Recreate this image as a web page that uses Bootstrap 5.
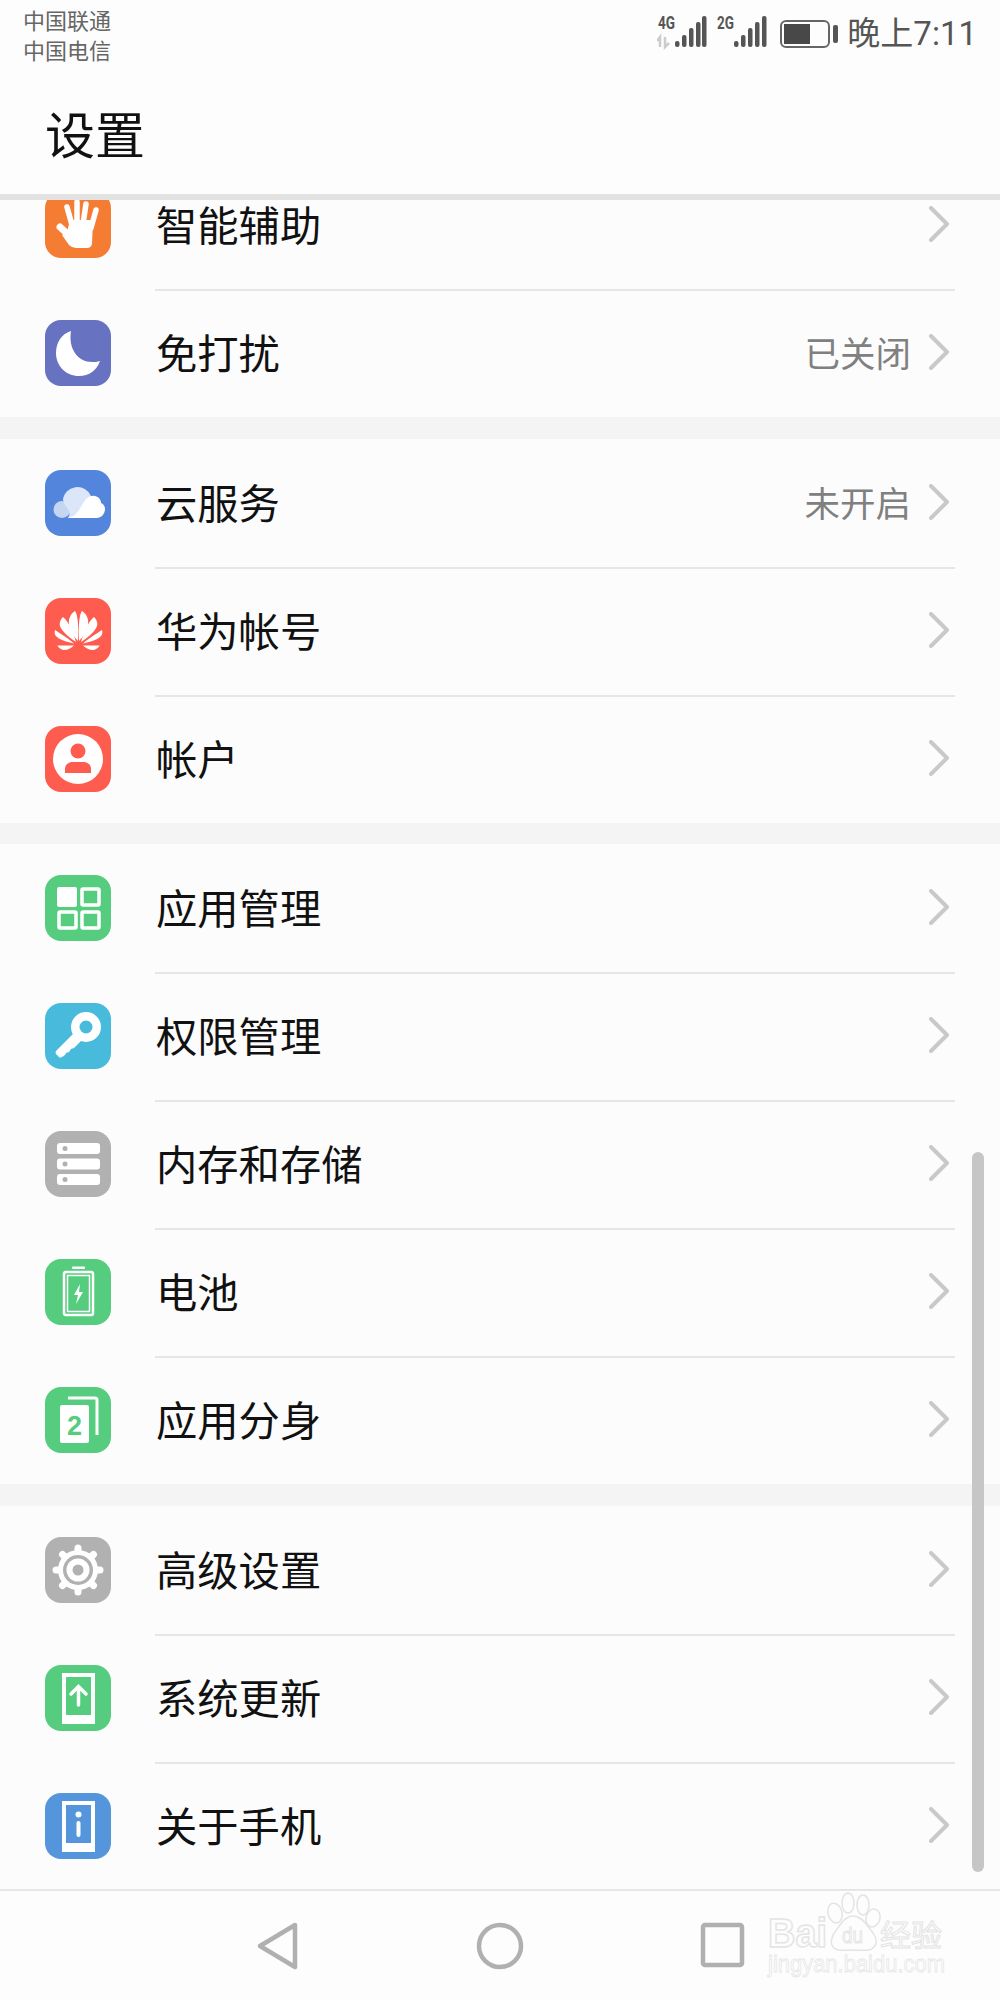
<!DOCTYPE html>
<html lang="zh-CN">
<head>
    <meta charset="UTF-8">
    <title>设置</title>
    <link href="https://cdn.jsdelivr.net/npm/bootstrap@5.3.0/dist/css/bootstrap.min.css" rel="stylesheet">
    <style>
        body { background: #fcfcfc; font-family: "Noto Sans CJK SC", "Liberation Sans", sans-serif; width: 1000px; height: 2000px; overflow: hidden; }
        .phone-top { height: 194px; background: #fdfdfd; }
        .status-strip { height: 68px; padding: 4px 23px 0 23px; }
        .carriers { font-size: 22px; line-height: 30px; color: #666; }
        .status-right { margin-top: 10px; }
        .clock { font-family: Roboto, "Noto Sans CJK SC", sans-serif; font-size: 33px; line-height: 40px; color: #555; margin-left: 9px; }
        .page-title { font-size: 50px; line-height: 56px; color: #111; margin: 36px 0 0 45px; }
        .top-rule { height: 6px; background: #e2e2e2; }
        .settings-scroll { height: 1689px; overflow: hidden; position: relative; }
        .settings-list { margin-top: -39px; }
        .group-gap { height: 22px; background: #f4f4f4; }
        .group-gap.thin { height: 21px; }
        .set-row { height: 128px; padding-left: 45px; }
        .set-icon { width: 66px; height: 66px; flex: none; display: block; margin-bottom: 1px; }
        .set-body { margin: 0 45px -2px 44px; padding: 0 6px 2px 0; border-bottom: 2px solid #e6e6e6; font-size: 41.3px; color: #111; }
        .set-body > span:first-child { margin-left: 1px; }
        .set-row.last .set-body { border-bottom-color: transparent; }
        .set-value { font-size: 35.5px; color: #808080; margin-right: 18px; }
        .chev { width: 20px; height: 36px; flex: none; }
        .scroll-thumb { position: absolute; right: 16px; top: 952px; width: 12px; height: 720px; border-radius: 6px; background: #c6c6c6; }
        .nav-strip { height: 111px; border-top: 2px solid #e6e6e6; background: #fdfdfd; position: relative; }
        .nav-btn { position: absolute; top: 30px; }
        .watermark { position: absolute; left: 764px; top: 0; width: 200px; height: 100px; }
    </style>
</head>
<body>

<div class="phone-top">
    <div class="status-strip d-flex justify-content-between align-items-start">
        <div class="carriers">中国联通<br>中国电信</div>
        <div class="status-right d-flex align-items-center">
            <svg width="176" height="40" viewBox="0 0 176 40">
                <g fill="#555">
                    <text x="1" y="15" font-family="Roboto" font-weight="700" font-size="18" textLength="17" lengthAdjust="spacingAndGlyphs">4G</text>
                    <rect x="18" y="27" width="4.500" height="6" rx="2"/><rect x="25" y="21" width="4.500" height="12" rx="2"/><rect x="32" y="14" width="4.500" height="19" rx="2"/><rect x="39" y="8" width="4.500" height="25" rx="2"/><rect x="45" y="2" width="4.500" height="31" rx="2"/>
                    <text x="60" y="15" font-family="Roboto" font-weight="700" font-size="18" textLength="17" lengthAdjust="spacingAndGlyphs">2G</text>
                    <rect x="77" y="27" width="4.500" height="6" rx="2"/><rect x="84" y="21" width="4.500" height="12" rx="2"/><rect x="91" y="14" width="4.500" height="19" rx="2"/><rect x="98" y="8" width="4.500" height="25" rx="2"/><rect x="105" y="2" width="4.500" height="31" rx="2"/>
                </g>
                <path d="M3 33V23L0 27M8 23v10l4-4" fill="none" stroke="#ccc" stroke-width="2.500"/>
                <rect x="124" y="7" width="48" height="26" rx="5" fill="none" stroke="#666" stroke-width="2"/>
                <rect x="127" y="10" width="26" height="20" fill="#484848"/>
            </svg>
            <svg width="5" height="18" viewBox="0 0 5 18"><rect width="5" height="18" rx="2" fill="#555"/></svg>
            <div class="clock">晚上7:11</div>
        </div>
    </div>
    <div class="page-title">设置</div>
</div>
<div class="top-rule"></div>

<div class="settings-scroll">
    <div class="settings-list">

        <div class="set-row d-flex">
            <svg class="set-icon align-self-center" viewBox="0 0 66 66"><rect width="66" height="66" rx="16" fill="#f57c33"/><path d="M15 35 27 46" stroke="#fff" stroke-width="7" stroke-linecap="round"/><path d="M22 15l5 18M32 10v22M41 12l-3 20M51 18l-5 18" stroke="#fff" stroke-width="5.500" stroke-linecap="round"/><path d="M25 28h23l-1 24q-1 4-5 4H31q-4 0-7-3L17 43l5-3z" fill="#fff"/></svg>
            <div class="set-body flex-grow-1 d-flex align-items-center">
                <span class="flex-grow-1">智能辅助</span>
                <svg class="chev" viewBox="0 0 20 36"><path d="M2 2 18 18 2 34" fill="none" stroke="#c9c9c9" stroke-width="4" stroke-linecap="round" stroke-linejoin="round"/></svg>
            </div>
        </div>
        <div class="set-row last d-flex">
            <svg class="set-icon align-self-center" viewBox="0 0 66 66"><rect width="66" height="66" rx="16" fill="#6772c0"/><path d="M26 11C16 14 11 23 11 33c0 13 10 23 23 23 10 0 18-6 21-15-3 1-5 1-8 1-14 0-24-13-21-31z" fill="#fff"/></svg>
            <div class="set-body flex-grow-1 d-flex align-items-center">
                <span class="flex-grow-1">免打扰</span>
                <span class="set-value">已关闭</span>
                <svg class="chev" viewBox="0 0 20 36"><path d="M2 2 18 18 2 34" fill="none" stroke="#c9c9c9" stroke-width="4" stroke-linecap="round" stroke-linejoin="round"/></svg>
            </div>
        </div>
        <div class="group-gap"></div>

        <div class="set-row d-flex">
            <svg class="set-icon align-self-center" viewBox="0 0 66 66"><rect width="66" height="66" rx="16" fill="#5385dc"/><circle cx="17" cy="39.500" r="8.500" fill="#c5d6f3"/><path d="M18 30a14.500 14 0 0 1 28-4L38 48H23q3-4 0-9-4-4-5-9z" fill="#dbe6f8"/><path d="M22 48c8-1 11-6 15-13 4-7 8-10 13-9 4 1 6 4 6 7 3 1 4 4 4 6 0 5-4 9-8 9z" fill="#fff"/></svg>
            <div class="set-body flex-grow-1 d-flex align-items-center">
                <span class="flex-grow-1">云服务</span>
                <span class="set-value">未开启</span>
                <svg class="chev" viewBox="0 0 20 36"><path d="M2 2 18 18 2 34" fill="none" stroke="#c9c9c9" stroke-width="4" stroke-linecap="round" stroke-linejoin="round"/></svg>
            </div>
        </div>
        <div class="set-row d-flex">
            <svg class="set-icon align-self-center" viewBox="0 0 66 66"><rect width="66" height="66" rx="16" fill="#fe5c4e"/><g fill="#fff"><g id="huawei-half"><path d="M33 43C26 36 23 28 24 22c1-5 4-8 6-9 2 2 4 12 3 30z"/><path d="M31 44C23 39 17 33 15 28c-1-4 1-7 3-9 5 4 10 14 13 25z"/><path d="M29 45.500C21 44 13 41 10.500 37.500c-1-1.500-1-3.500-.5-5.500 6 4 14 9 19 13.500z"/><path d="M29 47.500H12.500c.5 1.500 2.500 3.500 5.500 4.500 4 .5 8-2 11-4.500z"/></g><use href="#huawei-half" transform="matrix(-1 0 0 1 67 0)"/></g></svg>
            <div class="set-body flex-grow-1 d-flex align-items-center">
                <span class="flex-grow-1">华为帐号</span>
                <svg class="chev" viewBox="0 0 20 36"><path d="M2 2 18 18 2 34" fill="none" stroke="#c9c9c9" stroke-width="4" stroke-linecap="round" stroke-linejoin="round"/></svg>
            </div>
        </div>
        <div class="set-row last d-flex">
            <svg class="set-icon align-self-center" viewBox="0 0 66 66"><rect width="66" height="66" rx="16" fill="#fe5c4e"/><circle cx="33" cy="33" r="25" fill="#fff"/><circle cx="33" cy="25" r="7.500" fill="#fe5c4e"/><path d="M20 47v-4c0-5 4-7 8-7h10c4 0 8 2 8 7v4z" fill="#fe5c4e"/></svg>
            <div class="set-body flex-grow-1 d-flex align-items-center">
                <span class="flex-grow-1">帐户</span>
                <svg class="chev" viewBox="0 0 20 36"><path d="M2 2 18 18 2 34" fill="none" stroke="#c9c9c9" stroke-width="4" stroke-linecap="round" stroke-linejoin="round"/></svg>
            </div>
        </div>
        <div class="group-gap thin"></div>

        <div class="set-row d-flex">
            <svg class="set-icon align-self-center" viewBox="0 0 66 66"><rect width="66" height="66" rx="16" fill="#55cc7e"/><rect x="12" y="12" width="20" height="20" rx="2" fill="#fff"/><g fill="none" stroke="#fff" stroke-width="3.500"><rect x="37" y="14" width="17" height="16" rx="1"/><rect x="14" y="37" width="17" height="16" rx="1"/><rect x="37" y="37" width="17" height="16" rx="1"/></g></svg>
            <div class="set-body flex-grow-1 d-flex align-items-center">
                <span class="flex-grow-1">应用管理</span>
                <svg class="chev" viewBox="0 0 20 36"><path d="M2 2 18 18 2 34" fill="none" stroke="#c9c9c9" stroke-width="4" stroke-linecap="round" stroke-linejoin="round"/></svg>
            </div>
        </div>
        <div class="set-row d-flex">
            <svg class="set-icon align-self-center" viewBox="0 0 66 66"><rect width="66" height="66" rx="16" fill="#48bbdc"/><circle cx="41" cy="24" r="15" fill="#fff"/><path d="M30 29 11 48q-1 2 0 3l3 3q1 1 3 0l3-2 1-2 3-1 2-3 3-1 8-8z" fill="#fff"/><circle cx="41" cy="24" r="6.500" fill="#48bbdc"/></svg>
            <div class="set-body flex-grow-1 d-flex align-items-center">
                <span class="flex-grow-1">权限管理</span>
                <svg class="chev" viewBox="0 0 20 36"><path d="M2 2 18 18 2 34" fill="none" stroke="#c9c9c9" stroke-width="4" stroke-linecap="round" stroke-linejoin="round"/></svg>
            </div>
        </div>
        <div class="set-row d-flex">
            <svg class="set-icon align-self-center" viewBox="0 0 66 66"><rect width="66" height="66" rx="16" fill="#b1b1b1"/><g fill="#fff"><rect x="12" y="12" width="43" height="11" rx="3"/><rect x="12" y="27.500" width="43" height="11" rx="3"/><rect x="12" y="43" width="43" height="11" rx="3"/></g><g fill="#b1b1b1"><circle cx="20" cy="17.500" r="2.500"/><circle cx="20" cy="33" r="2.500"/><circle cx="20" cy="48.500" r="2.500"/></g></svg>
            <div class="set-body flex-grow-1 d-flex align-items-center">
                <span class="flex-grow-1">内存和存储</span>
                <svg class="chev" viewBox="0 0 20 36"><path d="M2 2 18 18 2 34" fill="none" stroke="#c9c9c9" stroke-width="4" stroke-linecap="round" stroke-linejoin="round"/></svg>
            </div>
        </div>
        <div class="set-row d-flex">
            <svg class="set-icon align-self-center" viewBox="0 0 66 66"><rect width="66" height="66" rx="16" fill="#55cc7e"/><rect x="27" y="7.500" width="13" height="2.500" rx="1" fill="#fff"/><rect x="19" y="13" width="29" height="43" rx="2" fill="none" stroke="#fff" stroke-width="2.500"/><rect x="22.500" y="16.500" width="22" height="36" fill="none" stroke="#fff" stroke-width="1.500"/><path d="M35 25l-6 11h4l-2 9 7-12h-4z" fill="#fff"/></svg>
            <div class="set-body flex-grow-1 d-flex align-items-center">
                <span class="flex-grow-1">电池</span>
                <svg class="chev" viewBox="0 0 20 36"><path d="M2 2 18 18 2 34" fill="none" stroke="#c9c9c9" stroke-width="4" stroke-linecap="round" stroke-linejoin="round"/></svg>
            </div>
        </div>
        <div class="set-row last d-flex">
            <svg class="set-icon align-self-center" viewBox="0 0 66 66"><rect width="66" height="66" rx="16" fill="#55cc7e"/><path d="M23 11h27q2 0 2 2v35" fill="none" stroke="#fff" stroke-width="3"/><rect x="15" y="18" width="29" height="38" rx="2" fill="#fff"/><text x="29.500" y="48" text-anchor="middle" font-family="Liberation Sans" font-weight="700" font-size="27" fill="#55cc7e">2</text></svg>
            <div class="set-body flex-grow-1 d-flex align-items-center">
                <span class="flex-grow-1">应用分身</span>
                <svg class="chev" viewBox="0 0 20 36"><path d="M2 2 18 18 2 34" fill="none" stroke="#c9c9c9" stroke-width="4" stroke-linecap="round" stroke-linejoin="round"/></svg>
            </div>
        </div>
        <div class="group-gap"></div>

        <div class="set-row d-flex">
            <svg class="set-icon align-self-center" viewBox="0 0 66 66"><rect width="66" height="66" rx="16" fill="#b1b1b1"/><circle cx="33" cy="33" r="20" fill="#fff"/><path d="M33 11v44M11 33h44M17.500 17.500l31 31M48.500 17.500l-31 31" stroke="#fff" stroke-width="7" stroke-linecap="round"/><circle cx="33" cy="33" r="15" fill="#b1b1b1"/><circle cx="33" cy="33" r="11.500" fill="#fff"/><circle cx="33" cy="33" r="5.500" fill="#b1b1b1"/></svg>
            <div class="set-body flex-grow-1 d-flex align-items-center">
                <span class="flex-grow-1">高级设置</span>
                <svg class="chev" viewBox="0 0 20 36"><path d="M2 2 18 18 2 34" fill="none" stroke="#c9c9c9" stroke-width="4" stroke-linecap="round" stroke-linejoin="round"/></svg>
            </div>
        </div>
        <div class="set-row d-flex">
            <svg class="set-icon align-self-center" viewBox="0 0 66 66"><rect width="66" height="66" rx="16" fill="#55cc7e"/><rect x="19" y="10" width="29" height="47" fill="none" stroke="#fff" stroke-width="4"/><rect x="17" y="50" width="33" height="8" rx="1" fill="#fff"/><path d="M33.500 40V22M26 29l7.500-7.500L41 29" fill="none" stroke="#fff" stroke-width="3.500" stroke-linecap="round"/></svg>
            <div class="set-body flex-grow-1 d-flex align-items-center">
                <span class="flex-grow-1">系统更新</span>
                <svg class="chev" viewBox="0 0 20 36"><path d="M2 2 18 18 2 34" fill="none" stroke="#c9c9c9" stroke-width="4" stroke-linecap="round" stroke-linejoin="round"/></svg>
            </div>
        </div>
        <div class="set-row last d-flex">
            <svg class="set-icon align-self-center" viewBox="0 0 66 66"><rect width="66" height="66" rx="16" fill="#5595dc"/><rect x="19" y="10" width="29" height="47" fill="none" stroke="#fff" stroke-width="4"/><rect x="17" y="50" width="33" height="8" rx="1" fill="#fff"/><circle cx="33.500" cy="21.500" r="3" fill="#fff"/><rect x="31.500" y="28" width="4" height="16" rx="2" fill="#fff"/></svg>
            <div class="set-body flex-grow-1 d-flex align-items-center">
                <span class="flex-grow-1">关于手机</span>
                <svg class="chev" viewBox="0 0 20 36"><path d="M2 2 18 18 2 34" fill="none" stroke="#c9c9c9" stroke-width="4" stroke-linecap="round" stroke-linejoin="round"/></svg>
            </div>
        </div>
    </div>
    <div class="scroll-thumb"></div>
</div>

<div class="nav-strip">
    <svg class="nav-btn" style="left:256px" width="44" height="50" viewBox="0 0 44 50"><path d="M39 4 4 25l35 21z" fill="none" stroke="#b0b0b0" stroke-width="4.500" stroke-linejoin="round"/></svg>
    <svg class="nav-btn" style="left:476px" width="50" height="50" viewBox="0 0 50 50"><circle cx="24" cy="25" r="21" fill="none" stroke="#b0b0b0" stroke-width="4.500"/></svg>
    <svg class="nav-btn" style="left:700px" width="46" height="50" viewBox="0 0 46 50"><rect x="3" y="4" width="39" height="40" rx="2" fill="none" stroke="#b0b0b0" stroke-width="4.500"/></svg>
    <svg class="watermark" viewBox="0 0 200 100">
        <g fill="#fdfdfd" stroke="#e4e4e4" stroke-width="1.500">
            <text x="4" y="56" font-family="Liberation Sans" font-weight="700" font-size="40" textLength="59" lengthAdjust="spacingAndGlyphs">Bai</text>
            <path d="M89 25C82 25 78 31 73 38 67 45 66 52 69 56 73 61 82 59 90 59 98 59 106 61 110 56 114 52 112 45 106 38 101 31 96 25 89 25z"/>
            <ellipse cx="71" cy="22" rx="7" ry="10" transform="rotate(-15 71 22)"/><ellipse cx="84" cy="12" rx="6" ry="10"/><ellipse cx="99" cy="14" rx="6" ry="10"/><ellipse cx="109" cy="27" rx="7" ry="9" transform="rotate(15 109 27)"/>
            <text x="78" y="52" font-family="Liberation Sans" font-size="22" stroke-width="1" textLength="21" lengthAdjust="spacingAndGlyphs">du</text>
        </g>
        <text x="116" y="55" font-size="30" fill="#fdfdfd" stroke="#e4e4e4" stroke-width="1" textLength="62" lengthAdjust="spacingAndGlyphs">经验</text>
        <text x="4" y="81" font-family="Liberation Sans" font-size="24" fill="#fdfdfd" stroke="#e6e6e6" stroke-width=".8" textLength="177" lengthAdjust="spacingAndGlyphs">jingyan.baidu.com</text>
    </svg>
</div>

<script src="https://cdn.jsdelivr.net/npm/bootstrap@5.3.0/dist/js/bootstrap.bundle.min.js"></script>
</body>
</html>
